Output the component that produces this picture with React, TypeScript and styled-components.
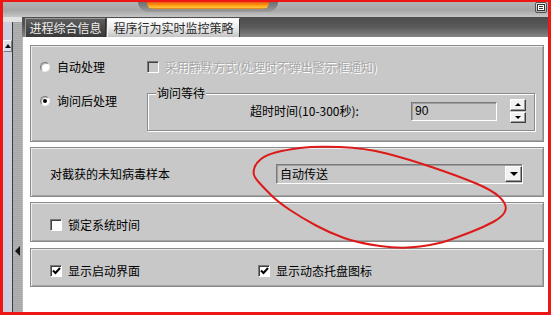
import React from 'react';
import styled, { createGlobalStyle } from 'styled-components';

const Global = createGlobalStyle`
  html, body { margin: 0; padding: 0; background: #fff; }
  body {
    font-family: "Noto Sans CJK SC", "Liberation Sans", sans-serif;
    font-size: 12px;
    color: #000;
  }
  * { box-sizing: border-box; }
`;

const Frame = styled.div`
  position: relative;
  width: 551px;
  height: 315px;
  border-style: solid;
  border-color: #ee1515;
  border-width: 2px 3px 3px 3px;
  display: flex;
  flex-direction: column;
  overflow: hidden;
  background: #fff;
`;

const Header = styled.div`
  height: 15px;
  flex: none;
  display: flex;
  align-items: flex-start;
  padding-left: 135px;
  background: linear-gradient(to bottom, #b2b2b2 0%, #a6a6a6 55%, #c6c6c6 100%);
`;

const BumpWrap = styled.div`
  width: 140px;
  height: 10px;
  padding: 0 9px 3px 9px;
  border-radius: 0 0 12px 12px;
  background: linear-gradient(to bottom, #6e6e6e, #9c9c9c);
`;

const Bump = styled.div`
  height: 7px;
  border-radius: 0 0 6px 6px;
  background: linear-gradient(to bottom, #ee5a10 0%, #ff9a12 45%, #ffc232 80%, #d67012 100%);
`;

const CornerIcon = styled.div`
  margin-left: auto;
  margin-right: 1px;
  width: 12px;
  height: 11px;
  border: 1px solid #505050;
  border-radius: 2px;
  background: linear-gradient(to bottom, #e6e6e6, #b4b4b4);
  display: flex;
  align-items: center;
  justify-content: center;
`;

const Body = styled.div`
  flex: 1;
  display: flex;
  min-height: 0;
`;

const Sidebar = styled.div`
  width: 19px;
  flex: none;
  display: flex;
  flex-direction: column;
`;

const SideTop = styled.div`
  height: 5px;
  background: #e2e2e2;
`;

const SideCols = styled.div`
  flex: 1;
  display: flex;
`;

const LightCol = styled.div`
  width: 10px;
  background: #cdd0dc;
  border-right: 1px solid #3c3c46;
  display: flex;
  flex-direction: column;
  align-items: center;
`;

const UpButton = styled.div`
  margin-top: 18px;
  width: 9px;
  height: 12px;
  background: #dcdee8;
  border: 1px solid;
  border-color: #ffffff #7c7c88 #7c7c88 #ffffff;
  display: flex;
  align-items: center;
  justify-content: center;
`;

const TriUp = styled.span`
  width: 0;
  height: 0;
  border-left: 3px solid transparent;
  border-right: 3px solid transparent;
  border-bottom: 4px solid #111;
`;

const Track = styled.div`
  width: 9px;
  background: repeating-linear-gradient(to bottom, #a6a6a6 0 1px, #b2b2b2 1px 2px);
  display: flex;
  flex-direction: column;
`;

const TriLeft = styled.span`
  margin-top: 224px;
  margin-left: 2px;
  width: 0;
  height: 0;
  border-top: 5px solid transparent;
  border-bottom: 5px solid transparent;
  border-right: 5px solid #151515;
`;

const Main = styled.div`
  flex: 1;
  display: flex;
  flex-direction: column;
  min-width: 0;
`;

const TabBar = styled.div`
  height: 20px;
  flex: none;
  display: flex;
  align-items: flex-end;
  gap: 1px;
  padding-left: 3px;
  background: linear-gradient(to bottom, #4c4c4c 0%, #5a5a5a 50%, #858585 100%);
`;

const Tab = styled.div<{ $active?: boolean; $w: number }>`
  width: ${p => p.$w}px;
  height: 19px;
  display: flex;
  align-items: center;
  justify-content: center;
  font-size: 12px;
  line-height: 12px;
  white-space: nowrap;
  border: 1px solid;
  border-bottom: none;
  border-color: ${p => (p.$active ? '#f4f4f4 #3a3a3a #3a3a3a #f4f4f4' : '#9a9a9a #2e2e2e #2e2e2e #9a9a9a')};
  color: ${p => (p.$active ? '#2a2a2a' : '#eeeeee')};
  background: ${p =>
    p.$active
      ? 'linear-gradient(to bottom, #ffffff 0%, #ececec 50%, #c4c4c4 100%)'
      : 'linear-gradient(to bottom, #5e5e5e 0%, #484848 55%, #3a3a3a 100%)'};
`;

const Content = styled.div`
  flex: 1;
  display: flex;
  flex-direction: column;
  background: #fff;
  border-left: 1px solid #b8b8b8;
  padding: 8px 4px 0 7px;
`;

const Panel = styled.div<{ $pt: number; $pb: number; $gap?: number; $pl?: number }>`
  margin-top: ${p => p.$gap ?? 0}px;
  background: #c8c8c8;
  border: 1px solid #8a8a8a;
  box-shadow: inset 1px 1px 0 #ededed, inset -1px -1px 0 #a4a4a4;
  padding: ${p => p.$pt}px 8px ${p => p.$pb}px ${p => p.$pl ?? 9}px;
  display: flex;
  flex-direction: column;
`;

const Row = styled.div<{ $mt?: number; $h?: number }>`
  display: flex;
  align-items: flex-start;
  margin-top: ${p => p.$mt ?? 0}px;
  min-height: ${p => p.$h ?? 12}px;
`;

const Col = styled.div<{ $w: number; $mt?: number }>`
  width: ${p => p.$w}px;
  flex: none;
  margin-top: ${p => p.$mt ?? 0}px;
`;

const Option = styled.label<{ $gap: number; $disabled?: boolean }>`
  display: flex;
  align-items: center;
  gap: ${p => p.$gap}px;
  height: 12px;
  line-height: 12px;
  white-space: nowrap;
  color: ${p => (p.$disabled ? '#a8a8a8' : '#000')};
  text-shadow: ${p => (p.$disabled ? '1px 1px 0 #ffffff' : 'none')};
`;

const RadioDot = styled.span<{ $checked?: boolean }>`
  width: 10px;
  height: 10px;
  flex: none;
  border-radius: 50%;
  background: #fff;
  border: 1px solid;
  border-color: #7a7a7a #f0f0f0 #f0f0f0 #7a7a7a;
  box-shadow: inset 1px 1px 0 #b0b0b0;
  display: flex;
  align-items: center;
  justify-content: center;
  &::after {
    content: '';
    width: 4px;
    height: 4px;
    border-radius: 50%;
    background: ${p => (p.$checked ? '#000' : 'transparent')};
  }
`;

const CheckBox = styled.span<{ $disabled?: boolean }>`
  width: 12px;
  height: 12px;
  flex: none;
  background: ${p => (p.$disabled ? '#c8c8c8' : '#fff')};
  border: 1px solid;
  border-color: #7a7a7a #ffffff #ffffff #7a7a7a;
  box-shadow: inset 1px 1px 0 #404040;
  display: flex;
  align-items: center;
  justify-content: center;
`;

const Group = styled.fieldset`
  width: 388px;
  margin: 0;
  padding: 0 8px 7px 0;
  border: 1px solid #8c8c8c;
  box-shadow: 1px 1px 0 #ffffff, inset 1px 1px 0 #ffffff;
  min-width: 0;
`;

const Legend = styled.legend`
  margin-left: 8px;
  padding: 0 1px;
  font-size: 12px;
  line-height: 12px;
  background: #c8c8c8;
`;

const GroupBody = styled.div`
  display: flex;
  align-items: center;
  padding-left: 102px;
`;

const FieldLabel = styled.span`
  width: 161px;
  flex: none;
  white-space: nowrap;
  line-height: 12px;
`;

const Edit = styled.div<{ $w: number; $h: number }>`
  width: ${p => p.$w}px;
  height: ${p => p.$h}px;
  flex: none;
  background: #c8c8c8;
  border: 1px solid;
  border-color: #7a7a7a #ffffff #ffffff #7a7a7a;
  box-shadow: inset 1px 1px 0 #9e9e9e;
  display: flex;
  align-items: center;
  padding-left: 3px;
  font-family: "Liberation Sans", "Noto Sans CJK SC", sans-serif;
  font-size: 12px;
  line-height: 12px;
`;

const ComboText = styled.span`
  flex: 1;
  font-family: "Noto Sans CJK SC", sans-serif;
`;

const Spin = styled.div`
  margin-left: 13px;
  width: 16px;
  height: 24px;
  flex: none;
  display: flex;
  flex-direction: column;
  gap: 1px;
`;

const RaisedBtn = styled.div<{ $w?: number; $h?: number }>`
  width: ${p => (p.$w ? `${p.$w}px` : '100%')};
  height: ${p => (p.$h ? `${p.$h}px` : 'auto')};
  flex: ${p => (p.$h ? 'none' : '1')};
  background: #f2f2f2;
  border: 1px solid;
  border-color: #ffffff #404040 #404040 #ffffff;
  box-shadow: inset -1px -1px 0 #9a9a9a;
  display: flex;
  align-items: center;
  justify-content: center;
`;

const TriSmallUp = styled.span`
  width: 0;
  height: 0;
  border-left: 3px solid transparent;
  border-right: 3px solid transparent;
  border-bottom: 3px solid #000;
`;

const TriDown = styled.span<{ $s: number }>`
  width: 0;
  height: 0;
  border-left: ${p => p.$s}px solid transparent;
  border-right: ${p => p.$s}px solid transparent;
  border-top: ${p => p.$s}px solid #000;
`;

const Label = styled.span<{ $w: number }>`
  width: ${p => p.$w}px;
  flex: none;
  white-space: nowrap;
  line-height: 12px;
`;

const CenterRow = styled.div<{ $h: number }>`
  display: flex;
  align-items: center;
  height: ${p => p.$h}px;
`;

const Overlay = styled.svg`
  position: absolute;
  left: -3px;
  top: -2px;
  pointer-events: none;
`;

const Check = () => (
  <svg width="9" height="8" viewBox="0 0 9 8">
    <polyline points="1,3.5 3.5,6 8,1" fill="none" stroke="#000" strokeWidth="2" />
  </svg>
);

const ListGlyph = () => (
  <svg width="8" height="7" viewBox="0 0 8 7">
    <rect x="0.5" y="0.5" width="7" height="6" fill="#fff" stroke="#333" strokeWidth="1" />
    <line x1="2" y1="2.5" x2="6" y2="2.5" stroke="#333" strokeWidth="1" />
    <line x1="2" y1="4.5" x2="6" y2="4.5" stroke="#333" strokeWidth="1" />
  </svg>
);

const loop: [number, number][] = [
  [253, 172], [256, 163], [266, 155], [285, 150], [315, 146], [365, 148], [408, 159],
  [458, 176], [492, 190], [507, 204], [504, 216], [484, 227], [458, 237], [438, 244],
  [402, 249], [358, 243], [330, 233], [302, 218], [278, 202], [264, 188], [255, 178],
];

function smooth(pts: [number, number][]) {
  const n = pts.length;
  const mid = (a: [number, number], b: [number, number]) =>
    `${((a[0] + b[0]) / 2).toFixed(1)} ${((a[1] + b[1]) / 2).toFixed(1)}`;
  let d = `M ${mid(pts[0], pts[1])}`;
  for (let i = 1; i <= n; i++) {
    const p = pts[i % n];
    const q = pts[(i + 1) % n];
    d += ` Q ${p[0]} ${p[1]} ${mid(p, q)}`;
  }
  return d;
}

export default function App() {
  return (
    <>
      <Global />
      <Frame>
        <Header>
          <BumpWrap>
            <Bump />
          </BumpWrap>
          <CornerIcon>
            <ListGlyph />
          </CornerIcon>
        </Header>
        <Body>
          <Sidebar>
            <SideTop />
            <SideCols>
              <LightCol>
                <UpButton>
                  <TriUp />
                </UpButton>
              </LightCol>
              <Track>
                <TriLeft />
              </Track>
            </SideCols>
          </Sidebar>
          <Main>
            <TabBar>
              <Tab $w={81}>进程综合信息</Tab>
              <Tab $w={133} $active>程序行为实时监控策略</Tab>
            </TabBar>
            <Content>
              <Panel $pt={15} $pb={10}>
                <Row>
                  <Col $w={107}>
                    <Option $gap={7}>
                      <RadioDot />
                      自动处理
                    </Option>
                  </Col>
                  <Option $gap={6} $disabled>
                    <CheckBox $disabled />
                    采用静默方式(处理时不弹出警示框通知)
                  </Option>
                </Row>
                <Row $mt={14}>
                  <Col $w={107} $mt={8}>
                    <Option $gap={7}>
                      <RadioDot $checked />
                      询问后处理
                    </Option>
                  </Col>
                  <Group>
                    <Legend>询问等待</Legend>
                    <GroupBody>
                      <FieldLabel>超时时间(10-300秒):</FieldLabel>
                      <Edit $w={86} $h={19}>90</Edit>
                      <Spin>
                        <RaisedBtn>
                          <TriSmallUp />
                        </RaisedBtn>
                        <RaisedBtn>
                          <TriDown $s={3} />
                        </RaisedBtn>
                      </Spin>
                    </GroupBody>
                  </Group>
                </Row>
              </Panel>

              <Panel $gap={5} $pt={16} $pb={12} $pl={19}>
                <CenterRow $h={20}>
                  <Label $w={226}>对截获的未知病毒样本</Label>
                  <Edit $w={247} $h={20}>
                    <ComboText>自动传送</ComboText>
                    <RaisedBtn $w={17} $h={16}>
                      <TriDown $s={4} />
                    </RaisedBtn>
                  </Edit>
                </CenterRow>
              </Panel>

              <Panel $gap={5} $pt={15} $pb={9} $pl={19}>
                <CenterRow $h={14}>
                  <Option $gap={6}>
                    <CheckBox />
                    锁定系统时间
                  </Option>
                </CenterRow>
              </Panel>

              <Panel $gap={6} $pt={15} $pb={8} $pl={19}>
                <CenterRow $h={14}>
                  <Col $w={208}>
                    <Option $gap={6}>
                      <CheckBox>
                        <Check />
                      </CheckBox>
                      显示启动界面
                    </Option>
                  </Col>
                  <Option $gap={6}>
                    <CheckBox>
                      <Check />
                    </CheckBox>
                    显示动态托盘图标
                  </Option>
                </CenterRow>
              </Panel>
            </Content>
          </Main>
        </Body>
        <Overlay width="551" height="315" viewBox="0 0 551 315">
          <path d={smooth(loop)} fill="none" stroke="#dd1a1a" strokeWidth="2" strokeLinejoin="round" />
        </Overlay>
      </Frame>
    </>
  );
}
